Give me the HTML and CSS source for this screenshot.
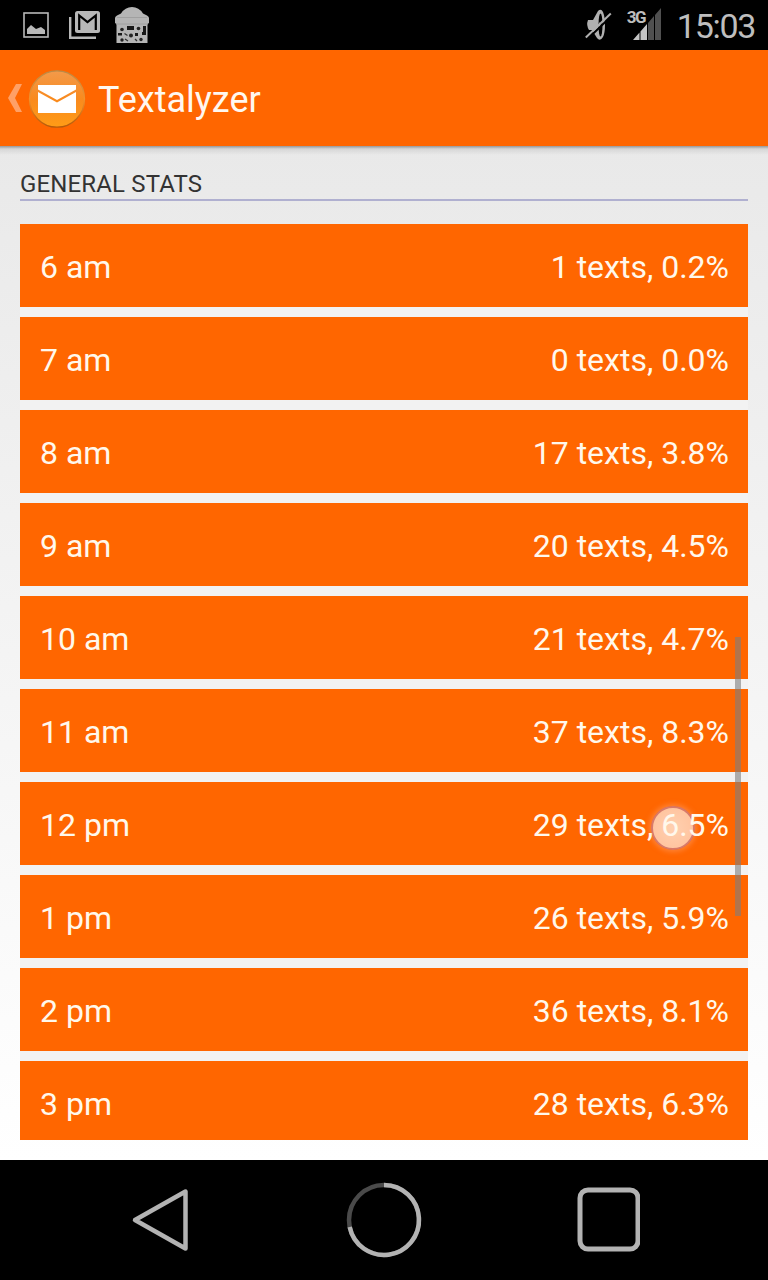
FILE: index.html
```html
<!DOCTYPE html>
<html lang="en">
<head>
    <meta charset="UTF-8">
    <meta name="viewport" content="width=device-width, initial-scale=1.0">
    <title>Textalyzer</title>
    <link rel="stylesheet" href="styles.css">
</head>
<body>

<div class="status-bar">
    <div class="notifications">
        <svg class="icon-picture" width="26" height="26" viewBox="0 0 26 26">
            <rect x="1" y="1" width="24" height="24" fill="none" stroke="#b8b8b8" stroke-width="1.6"/>
            <path d="M4 22v-5l4-4 5 4 5-2 4 3v4z" fill="#b8b8b8"/>
        </svg>
        <svg class="icon-mail" width="32" height="28" viewBox="0 0 32 28">
            <path d="M1.200 6v20.800H27" fill="none" stroke="#b8b8b8" stroke-width="2.400"/>
            <rect x="6" y="0" width="25" height="22" rx="2.500" fill="#b8b8b8"/>
            <path d="M10.200 19V4.500l8.300 6.500 8.300-6.500V19" fill="none" stroke="#000" stroke-width="2.200"/>
        </svg>
        <svg class="icon-jar" width="34" height="36" viewBox="0 0 34 36">
            <path d="M1.500 36V17L0 16v-5q0-1.500 2-2.500l4-2Q10 0 17 0t11 6.500l4 2q2 1 2 2.500v5l-1.500 1v19z" fill="#b5b5b5"/>
            <path d="M2 10.500h30M1 17h32" stroke="#a0a0a0" stroke-width="1"/>
            <path d="M12 19h7v4h-7zM28 19h3v9h-4v-3h1zM3 26h4v2.500H3zM20 26h3v3h-3z" fill="#181818"/>
            <g fill="#222">
                <circle cx="7" cy="22.500" r="1.800"/>
                <circle cx="23.500" cy="21.500" r="1.800"/>
                <circle cx="16" cy="28.500" r="2"/>
                <circle cx="7" cy="33" r="1.700"/>
                <circle cx="26" cy="32.500" r="1.700"/>
            </g>
            <path d="M9.500 26.500l3 2M10 32l3 2M20 32l2 2" stroke="#333" stroke-width="1.300"/>
        </svg>
    </div>
    <div class="system">
        <svg class="icon-mute" width="28" height="34" viewBox="0 0 28 34">
            <path d="M3 12h5l5-9q3-3 5 1 2 5 2 13t-2 12q-3 5-6 1l-5-8H4q-3-5-1-10z" fill="#b0b0b0"/>
            <ellipse cx="15.500" cy="17" rx="2" ry="11.500" fill="#000"/>
            <path d="M14 14q3 3 0 7z" fill="#b0b0b0"/>
            <path d="M2 31.500L27 7.500" stroke="#000" stroke-width="2"/>
            <path d="M.8 29.500L25.800 5.500" stroke="#b0b0b0" stroke-width="2"/>
        </svg>
        <div class="signal">
            <span class="network">3G</span>
            <svg width="28" height="32" viewBox="0 0 28 32">
                <path d="M0 32l6.500-7.500V32zM7.500 23.500l6.500-7.500v16H7.500z" fill="#c4c4c4"/>
                <path d="M15 15l6-7v24h-6zM22 7l6-7v32h-6z" fill="#505050"/>
            </svg>
        </div>
        <span class="clock">15:03</span>
    </div>
</div>

<div class="action-bar">
    <svg class="back" width="14" height="28" viewBox="0 0 14 28">
        <path d="M8 0h6L7 14l7 14H8L0 14z" fill="#ffa066"/>
    </svg>
    <svg class="logo" width="58" height="60" viewBox="0 0 58 60">
        <defs>
            <linearGradient id="disc" x1="0" y1="0" x2="0" y2="1">
                <stop offset="0" stop-color="#f39a4a"/>
                <stop offset="0.5" stop-color="#f98a1e"/>
                <stop offset="1" stop-color="#ff9c16"/>
            </linearGradient>
            <linearGradient id="rim" x1="0" y1="0" x2="0" y2="1">
                <stop offset="0" stop-color="#b98a48"/>
                <stop offset="0.5" stop-color="#f3912b"/>
                <stop offset="1" stop-color="#b45a0a"/>
            </linearGradient>
        </defs>
        <ellipse cx="29" cy="31" rx="27.500" ry="28.200" fill="url(#disc)" stroke="url(#rim)" stroke-width="1.300"/>
        <path d="M10 17h38v4.500L29 32 10 21.500z" fill="#fff"/>
        <path d="M10 24L29 34.500 48 24V45H10z" fill="#fff"/>
    </svg>
    <h1 class="title">Textalyzer</h1>
</div>

<div class="content">
    <h2 class="section-title">GENERAL STATS</h2>
    <div class="stats">
        <div class="stat"><span>6 am</span><span>1 texts, 0.2%</span></div>
        <div class="stat"><span>7 am</span><span>0 texts, 0.0%</span></div>
        <div class="stat"><span>8 am</span><span>17 texts, 3.8%</span></div>
        <div class="stat"><span>9 am</span><span>20 texts, 4.5%</span></div>
        <div class="stat"><span>10 am</span><span>21 texts, 4.7%</span></div>
        <div class="stat"><span>11 am</span><span>37 texts, 8.3%</span></div>
        <div class="stat"><span>12 pm</span><span>29 texts, 6.5%</span></div>
        <div class="stat"><span>1 pm</span><span>26 texts, 5.9%</span></div>
        <div class="stat"><span>2 pm</span><span>36 texts, 8.1%</span></div>
        <div class="stat"><span>3 pm</span><span>28 texts, 6.3%</span></div>
    </div>
    <div class="scrollbar"></div>
    <div class="touch"></div>
</div>

<div class="nav-bar">
    <svg width="64" height="80" viewBox="0 0 64 80">
        <path d="M7 40L57.500 11.500v57z" fill="none" stroke="#b3b3b3" stroke-width="4.500" stroke-linejoin="round"/>
    </svg>
    <svg width="80" height="80" viewBox="0 0 80 80">
        <circle cx="40" cy="40" r="35" fill="none" stroke="#4a4a4a" stroke-width="4.500"/>
        <path d="M40 5A35 35 0 1 1 5.700 47" fill="none" stroke="#b3b3b3" stroke-width="4.500"/>
    </svg>
    <svg width="64" height="80" viewBox="0 0 64 80">
        <rect x="4" y="10" width="58" height="59" rx="8" fill="none" stroke="#b3b3b3" stroke-width="5"/>
    </svg>
</div>

</body>
</html>
```
FILE: styles.css
```css
* {
    box-sizing: border-box;
}
body {
    margin: 0;
    width: 768px;
    height: 1280px;
    overflow: hidden;
    display: flex;
    flex-direction: column;
    background-color: #000;
    font-family: Roboto, sans-serif;
}
svg {
    display: block;
}
.status-bar {
    height: 50px;
    display: flex;
    justify-content: space-between;
    padding: 0 13px 0 23px;
}
.notifications, .system {
    display: flex;
    align-items: flex-start;
}
.icon-picture {
    margin-top: 12px;
}
.icon-mail {
    margin: 11px 0 0 20px;
}
.icon-jar {
    margin: 7px 0 0 14px;
}
.icon-mute {
    margin: 8px 20px 0 0;
}
.signal {
    position: relative;
    margin: 8px 16px 0 0;
}
.network {
    position: absolute;
    left: -6px;
    top: 0;
    font-size: 17px;
    line-height: 18px;
    font-weight: 700;
    letter-spacing: -1.5px;
    color: #bdbdbd;
}
.clock {
    font-size: 34px;
    line-height: 52px;
    letter-spacing: -1.3px;
    color: #bebebe;
}
.action-bar {
    height: 96px;
    display: flex;
    align-items: center;
    padding-left: 8px;
    background-color: #ff6600;
}
.logo {
    margin-left: 6px;
}
.title {
    margin: 4px 0 0 12px;
    font-size: 36px;
    font-weight: 400;
    color: #fff8f0;
}
.content {
    position: relative;
    height: 1014px;
    overflow: hidden;
    padding: 22px 20px 20px;
    background: linear-gradient(rgba(0, 0, 0, 0.35), rgba(0, 0, 0, 0.08) 3px, rgba(0, 0, 0, 0) 9px), linear-gradient(#e9e9e9, #fff);
}
.section-title {
    height: 33px;
    margin: 0 0 23px;
    border-bottom: 2px solid #b0b0d0;
    font-size: 24px;
    line-height: 32px;
    font-weight: 400;
    letter-spacing: 0.15px;
    color: #333;
}
.stats {
    height: 916px;
    overflow: hidden;
    display: flex;
    flex-direction: column;
    gap: 10px;
    background-color: #f2f2f2;
}
.stat {
    flex: 0 0 83px;
    display: flex;
    justify-content: space-between;
    align-items: center;
    padding: 2px 19px 0 20px;
    background-color: #ff6600;
    color: #fff8ec;
    font-size: 32px;
}
/* keeps the labels above the touch marker */
.stat span {
    position: relative;
    z-index: 1;
}
.scrollbar {
    position: absolute;
    left: 735px;
    top: 491px;
    width: 6px;
    height: 279px;
    background-color: rgba(125, 125, 125, 0.6);
}
.touch {
    position: absolute;
    left: 651px;
    top: 660px;
    width: 44px;
    height: 44px;
    border: 2px solid #d87a6a;
    border-radius: 50%;
    background: radial-gradient(#ffd0b0, #ffc09a);
    box-shadow: 0 0 5px 2px rgba(255, 160, 105, 0.5);
}
.nav-bar {
    height: 120px;
    display: flex;
    justify-content: space-between;
    align-items: center;
    padding: 0 128px 0 128px;
}
```
